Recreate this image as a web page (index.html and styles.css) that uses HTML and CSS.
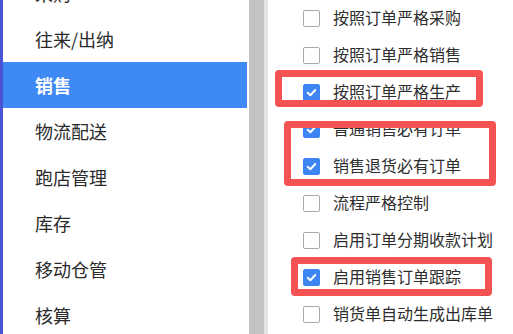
FILE: index.html
```html
<!DOCTYPE html>
<html lang="zh">
<head>
<meta charset="utf-8">
<link rel="stylesheet" href="styles.css">
</head>
<body>
<div class="page">
  <nav class="sidebar">
    <div class="nav-item">采购</div>
    <div class="nav-item">往来/出纳</div>
    <div class="nav-item active">销售</div>
    <div class="nav-item">物流配送</div>
    <div class="nav-item">跑店管理</div>
    <div class="nav-item">库存</div>
    <div class="nav-item">移动仓管</div>
    <div class="nav-item">核算</div>
  </nav>
  <div class="divider"></div>
  <main class="options">
    <label class="opt"><span class="box"></span><span class="lbl">按照订单严格采购</span></label>
    <label class="opt"><span class="box"></span><span class="lbl">按照订单严格销售</span></label>
    <label class="opt"><span class="box on"><svg viewBox="0 0 17 17"><path d="M4.2 8.8l3 2.8 5.6-5.9"/></svg></span><span class="lbl">按照订单严格生产</span></label>
    <label class="opt"><span class="box on"><svg viewBox="0 0 17 17"><path d="M4.2 8.8l3 2.8 5.6-5.9"/></svg></span><span class="lbl">普通销售必有订单</span></label>
    <label class="opt"><span class="box on"><svg viewBox="0 0 17 17"><path d="M4.2 8.8l3 2.8 5.6-5.9"/></svg></span><span class="lbl">销售退货必有订单</span></label>
    <label class="opt"><span class="box"></span><span class="lbl">流程严格控制</span></label>
    <label class="opt"><span class="box"></span><span class="lbl">启用订单分期收款计划</span></label>
    <label class="opt"><span class="box on"><svg viewBox="0 0 17 17"><path d="M4.2 8.8l3 2.8 5.6-5.9"/></svg></span><span class="lbl">启用销售订单跟踪</span></label>
    <label class="opt"><span class="box"></span><span class="lbl">销货单自动生成出库单</span></label>
  </main>
  <div class="mark mark-1"></div>
  <div class="mark mark-2"></div>
  <div class="mark mark-3"></div>
</div>
</body>
</html>
```
FILE: styles.css
```css
html, body {
  margin: 0;
  padding: 0;
  background: #ffffff;
}
body {
  width: 513px;
  height: 334px;
  overflow: hidden;
  font-family: "Noto Sans CJK SC", "Noto Sans", sans-serif;
  color: #2b2b2b;
}
.page {
  position: relative;
  display: flex;
  width: 513px;
  height: 334px;
  overflow: hidden;
}
.sidebar {
  width: 244px;
  flex: none;
  border-left: 3px solid #4a52d6;
  margin-right: 2px;
  display: flex;
  flex-direction: column;
  margin-top: -30px;
}
.nav-item {
  height: 46px;
  flex: none;
  display: flex;
  align-items: center;
  padding-left: 32px;
  font-size: 18px;
  color: #2a2a2a;
}
.nav-item.active {
  background: #3f89f5;
  color: #ffffff;
  font-weight: 700;
}
.divider {
  width: 15px;
  flex: none;
  background: #c3c3c3;
  border-right: 4px solid #e4e4e4;
}
.options {
  flex: 1;
  display: flex;
  flex-direction: column;
  padding-left: 35px;
}
.opt {
  height: 37px;
  flex: none;
  display: flex;
  align-items: center;
  gap: 13px;
  font-size: 16px;
  color: #2e2e2e;
}
.lbl {
  padding-bottom: 3px;
}
.box {
  width: 15px;
  height: 15px;
  flex: none;
  border: 1px solid #a9a9a9;
  border-radius: 2px;
  background: #fff;
  display: flex;
}
.box.on {
  background: #3d85f3;
  border-color: #3d85f3;
}
.box svg {
  width: 15px;
  height: 15px;
}
.box svg path {
  fill: none;
  stroke: #ffffff;
  stroke-width: 2.2;
  stroke-linecap: round;
  stroke-linejoin: round;
}
.mark {
  position: absolute;
  border: 7px solid #f55353;
  border-radius: 4px;
  box-sizing: border-box;
}
.mark-1 { left: 275px; top: 70px; width: 208px; height: 37px; }
.mark-2 { left: 284px; top: 121px; width: 212px; height: 65px; }
.mark-3 { left: 291px; top: 257px; width: 201px; height: 39px; }
```
